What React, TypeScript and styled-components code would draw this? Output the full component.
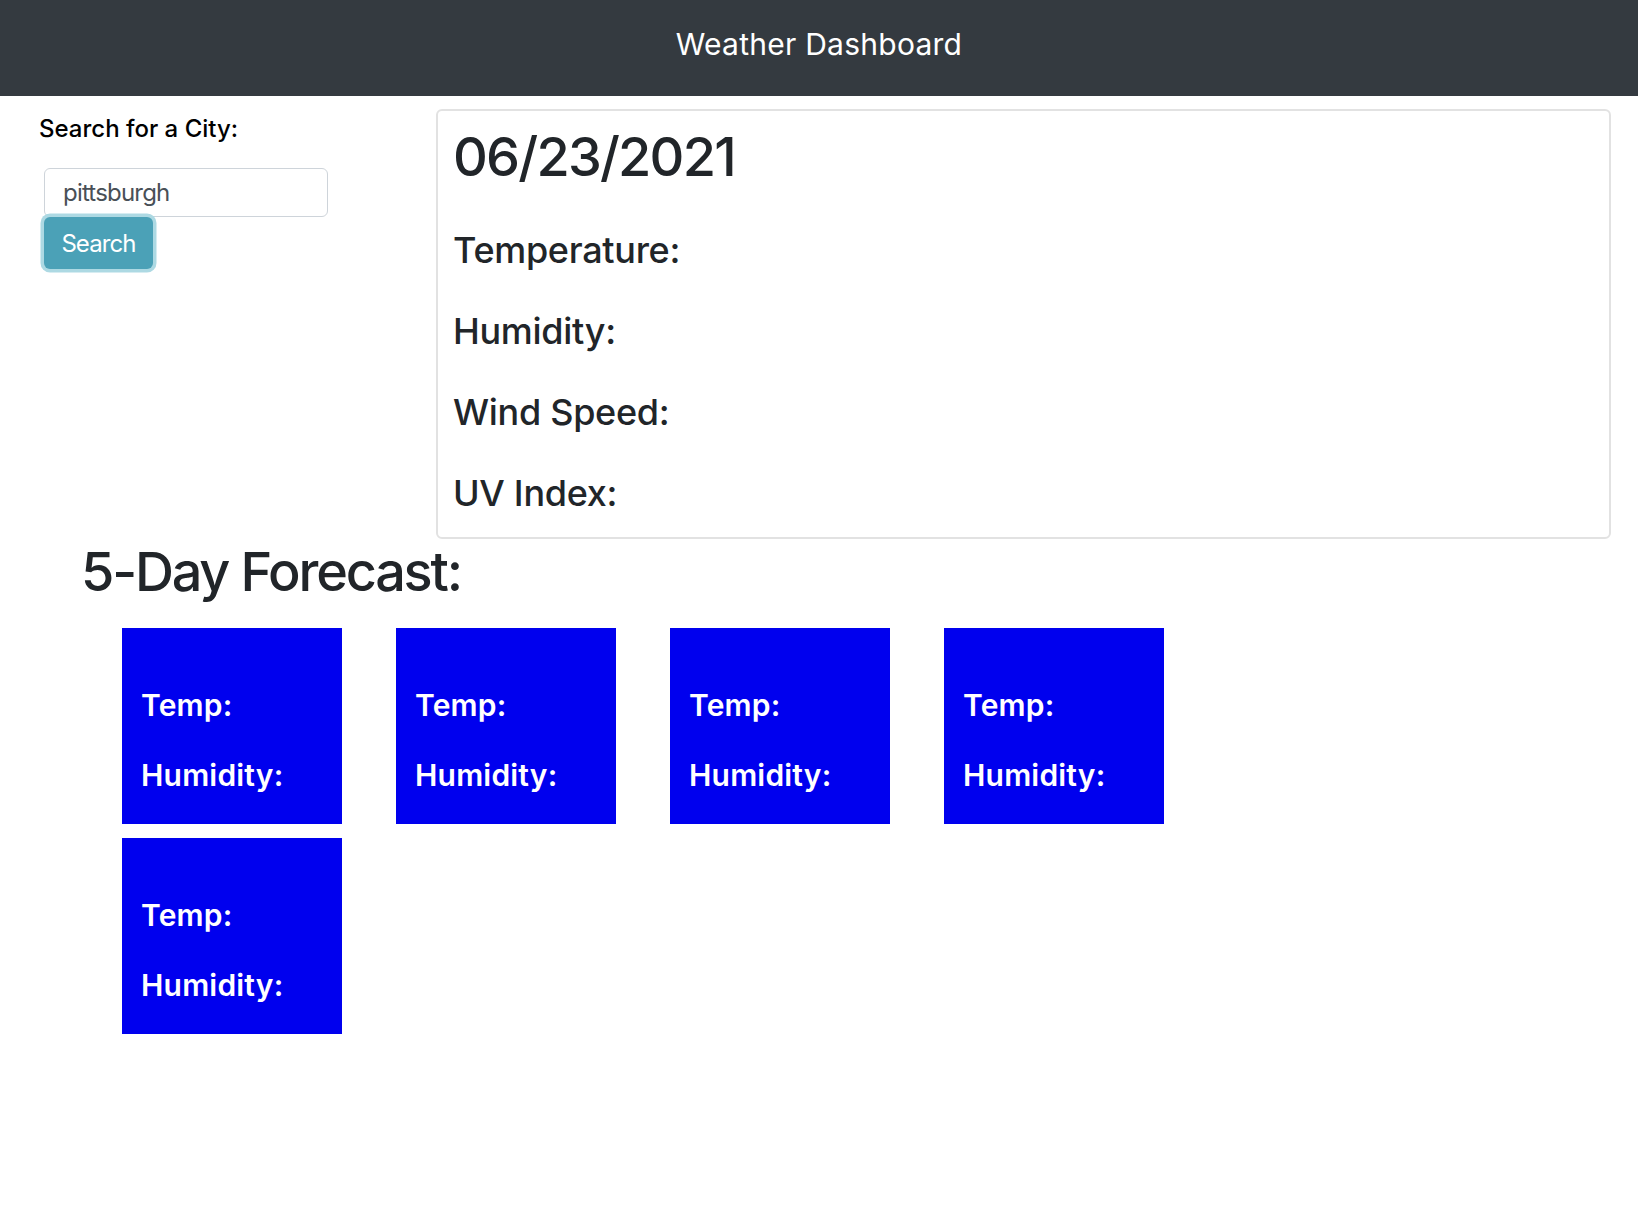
import React from "react";
import styled, { createGlobalStyle } from "styled-components";

const GlobalStyle = createGlobalStyle`
  html, body {
    margin: 0;
    padding: 0;
    background: #ffffff;
  }
  body {
    font-family: Inter, "Noto Sans", "Liberation Sans", sans-serif;
    color: #212529;
  }
  * { box-sizing: border-box; }
`;

const Header = styled.header`
  height: 96px;
  background: #343a40;
  display: flex;
  align-items: center;
  justify-content: center;
  padding-bottom: 8px;
`;

const Brand = styled.h1`
  margin: 0;
  font-size: 30px;
  font-weight: 400;
  letter-spacing: 0.25px;
  color: #ffffff;
  line-height: 36px;
`;

const TopSection = styled.section`
  display: flex;
  align-items: flex-start;
`;

const Sidebar = styled.aside`
  width: 436px;
  flex-shrink: 0;
  padding: 15px 0 0 39px;
  display: flex;
  flex-direction: column;
  align-items: flex-start;
`;

const Label = styled.label`
  font-size: 24px;
  font-weight: 500;
  line-height: 36px;
  color: #000000;
`;

const SearchForm = styled.form`
  display: flex;
  flex-direction: column;
  align-items: flex-start;
  margin: 21px 0 0 5px;
`;

const CityInput = styled.input`
  width: 284px;
  height: 49px;
  padding: 0 18px;
  border: 1.5px solid #ced4da;
  border-radius: 6px;
  font-family: inherit;
  font-size: 24px;
  letter-spacing: -0.8px;
  color: #495057;
  background: #fff;
  outline: none;
`;

const SearchButton = styled.button`
  width: 109px;
  height: 52px;
  padding: 0;
  border: none;
  border-radius: 6px;
  background: #4ba1b7;
  color: #ffffff;
  font-family: inherit;
  font-size: 24px;
  font-weight: 400;
  letter-spacing: -0.9px;
  box-shadow: 0 0 0 3.5px #add9e3;
  cursor: pointer;
`;

const CurrentCard = styled.div`
  flex: 1;
  margin: 13px 27px 0 0;
  border: 2px solid #e2e2e2;
  border-radius: 6px;
  padding: 14px 15px 22px 15px;
  display: flex;
  flex-direction: column;
  gap: 37px;
`;

const DateTitle = styled.h2`
  margin: 0 0 2px;
  font-size: 54px;
  font-weight: 500;
  letter-spacing: -1.8px;
  line-height: 64px;
  color: #212529;
`;

const InfoLine = styled.h3`
  margin: 0;
  font-size: 36px;
  font-weight: 500;
  letter-spacing: -0.3px;
  line-height: 44px;
  color: #212529;
`;

const ForecastSection = styled.section`
  padding: 1px 0 0 81px;
`;

const ForecastTitle = styled.h2`
  margin: 0;
  font-size: 54px;
  font-weight: 500;
  letter-spacing: -2.2px;
  line-height: 64px;
  color: #212529;
`;

const ForecastGrid = styled.div`
  display: grid;
  grid-template-columns: repeat(4, 220px);
  column-gap: 54px;
  row-gap: 14px;
  margin: 24px 0 0 41px;
`;

const DayCard = styled.div`
  height: 196px;
  background: #0000ee;
  padding: 59px 0 0 19px;
  display: flex;
  flex-direction: column;
  gap: 34px;
`;

const DayLine = styled.p`
  margin: 0;
  font-size: 30px;
  font-weight: 600;
  letter-spacing: 0.2px;
  line-height: 36px;
  color: #ffffff;
`;

const days = [1, 2, 3, 4, 5];

export default function App() {
  return (
    <>
      <GlobalStyle />
      <Header>
        <Brand>Weather Dashboard</Brand>
      </Header>
      <TopSection>
        <Sidebar>
          <Label htmlFor="city">Search for a City:</Label>
          <SearchForm onSubmit={(e) => e.preventDefault()}>
            <CityInput id="city" defaultValue="pittsburgh" />
            <SearchButton type="submit">Search</SearchButton>
          </SearchForm>
        </Sidebar>
        <CurrentCard>
          <DateTitle>06/23/2021</DateTitle>
          <InfoLine>Temperature:</InfoLine>
          <InfoLine>Humidity:</InfoLine>
          <InfoLine>Wind Speed:</InfoLine>
          <InfoLine>UV Index:</InfoLine>
        </CurrentCard>
      </TopSection>
      <ForecastSection>
        <ForecastTitle>5-Day Forecast:</ForecastTitle>
        <ForecastGrid>
          {days.map((d) => (
            <DayCard key={d}>
              <DayLine>Temp:</DayLine>
              <DayLine>Humidity:</DayLine>
            </DayCard>
          ))}
        </ForecastGrid>
      </ForecastSection>
    </>
  );
}
